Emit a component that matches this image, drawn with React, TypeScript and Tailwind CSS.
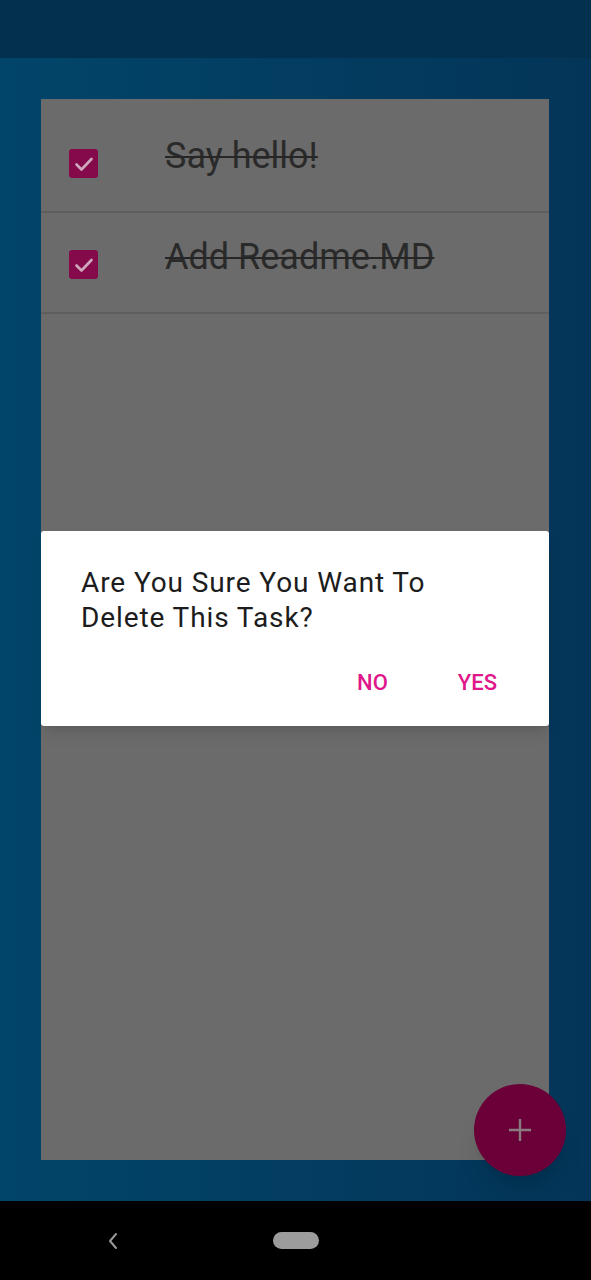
const tasks = ["Say hello!", "Add Readme.MD"];

function CheckBox() {
  return (
    <div className="w-[29px] h-[29px] rounded-[3px] bg-[#850a4c] flex items-center justify-center">
      <svg width="24" height="24" viewBox="0 0 24 24" fill="none">
        <path d="M4.5 12.5l5 5L19.5 7" stroke="#cfa8bb" strokeWidth="2.6" strokeLinecap="round" strokeLinejoin="round" />
      </svg>
    </div>
  );
}

export default function App() {
  return (
    <div
      className="relative w-[591px] h-[1280px] flex flex-col overflow-hidden"
      style={{ fontFamily: "Roboto, 'Liberation Sans', sans-serif" }}
    >
      {/* status bar */}
      <div className="h-[58px] bg-[#03304f]" />

      {/* body */}
      <div className="flex-1 flex flex-col bg-gradient-to-r from-[#02456a] to-[#033558] pt-[41px] pl-[41px] pr-[42px] pb-[41px]">
        <div className="flex-1 bg-[#6b6b6b] pt-[13px]">
          {tasks.map((t, i) => (
            <div
              key={i}
              className="h-[101px] flex items-start border-b-[2px] border-[#5e5e5e] pl-[28px]"
            >
              <div className="mt-[37px]">
                <CheckBox />
              </div>
              <span className="ml-[67px] mt-[26px] text-[36px] text-[#2a2a2a] line-through decoration-[2px] decoration-[#262626] leading-none">
                {t}
              </span>
            </div>
          ))}
        </div>
      </div>

      {/* nav bar */}
      <div className="h-[79px] bg-black flex items-center justify-center relative">
        <svg className="absolute left-[106px] top-[30px]" width="14" height="20" viewBox="0 0 14 20" fill="none">
          <path d="M10 3L4 10l6 7" stroke="#9a9a9a" strokeWidth="2" strokeLinecap="round" strokeLinejoin="round" />
        </svg>
        <div className="w-[46px] h-[17px] rounded-full bg-[#9c9c9c] -mt-[1px]" />
      </div>

      {/* dialog */}
      <div className="absolute left-[41px] top-[531px] w-[508px] h-[195px] bg-white rounded-[3px] shadow-lg pl-[40px] pr-[52px] pt-[34px] flex flex-col">
        <p className="text-[28px] leading-[35px] tracking-[0.9px] text-[#1c1c1c]">
          Are You Sure You Want To
          <br />
          Delete This Task?
        </p>
        <div className="flex justify-end gap-[70px] mt-[37px]">
          <span className="text-[22px] font-medium text-[#e0168b] leading-none">NO</span>
          <span className="text-[22px] font-medium text-[#e0168b] leading-none">YES</span>
        </div>
      </div>

      {/* fab */}
      <div className="absolute left-[474px] top-[1084px] w-[92px] h-[92px] rounded-full bg-[#6a0037] shadow-xl flex items-center justify-center">
        <svg width="26" height="26" viewBox="0 0 26 26">
          <path d="M13 2v22M2 13h22" stroke="#8a7b80" strokeWidth="2.4" />
        </svg>
      </div>
    </div>
  );
}
